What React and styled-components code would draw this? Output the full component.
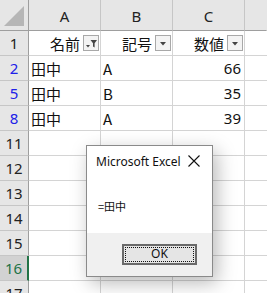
import React from "react";
import styled, { createGlobalStyle } from "styled-components";

const GlobalStyle = createGlobalStyle`
  html, body {
    margin: 0;
    padding: 0;
    background: #ffffff;
    overflow: hidden;
  }
`;

const rows = [
  { num: 1, header: true },
  { num: 2, a: "田中", b: "A", c: "66", filtered: true },
  { num: 5, a: "田中", b: "B", c: "35", filtered: true },
  { num: 8, a: "田中", b: "A", c: "39", filtered: true },
  { num: 11 },
  { num: 12 },
  { num: 13 },
  { num: 14 },
  { num: 15 },
  { num: 16, active: true },
  { num: 17 },
];

const headers = [
  { label: "名前", filter: true },
  { label: "記号" },
  { label: "数値" },
];

function DropButton({ filter }) {
  return (
    <FilterBtn>
      {filter ? (
        <svg width="14" height="14" viewBox="0 0 14 14">
          <path d="M2 9 L6 9 L4 11.5 Z" fill="#444" />
          <path d="M6.5 4 L13 4 L10.6 7.2 L10.6 11.5 L9 10.6 L9 7.2 Z" fill="#444" />
        </svg>
      ) : (
        <svg width="14" height="14" viewBox="0 0 14 14">
          <path d="M4 6 L10 6 L7 9.5 Z" fill="#444" />
        </svg>
      )}
    </FilterBtn>
  );
}

export default function App() {
  return (
    <Page>
      <GlobalStyle />
      <Sheet>
        <Corner>
          <CornerTri />
        </Corner>
        {["A", "B", "C"].map((c) => (
          <ColHead key={c}>{c}</ColHead>
        ))}
        <ColHead $rest />
        {rows.map((r) => (
          <React.Fragment key={r.num}>
            <RowHead $filtered={r.filtered} $active={r.active}>
              {r.num}
            </RowHead>
            {r.header
              ? headers.map((h) => (
                  <Cell key={h.label} $right>
                    <HeadText>{h.label}</HeadText>
                    <DropButton filter={h.filter} />
                  </Cell>
                ))
              : [
                  <Cell key="a">{r.a}</Cell>,
                  <Cell key="b">{r.b}</Cell>,
                  <Cell key="c" $right $num>
                    {r.c}
                  </Cell>,
                ]}
            <Cell $rest />
          </React.Fragment>
        ))}
      </Sheet>
      <Dialog>
        <DialogBody>
          <TitleBar>
            <Title>Microsoft Excel</Title>
            <svg width="12" height="12" viewBox="0 0 12 12">
              <path d="M0.5 0.5 L11.5 11.5 M11.5 0.5 L0.5 11.5" stroke="#111" strokeWidth="1.1" />
            </svg>
          </TitleBar>
          <Message>=田中</Message>
        </DialogBody>
        <Footer>
          <OkButton>
            <FocusRect>OK</FocusRect>
          </OkButton>
        </Footer>
      </Dialog>
    </Page>
  );
}

const Page = styled.div`
  position: relative;
  width: 267px;
  height: 293px;
  overflow: hidden;
  font-family: "Noto Sans CJK JP", "Liberation Sans", sans-serif;
`;

const Sheet = styled.div`
  display: grid;
  grid-template-columns: 29px 72px 72px 72px 1fr;
  grid-template-rows: 31px repeat(11, 25px);
`;

const Corner = styled.div`
  background: #e6e6e6;
  border-right: 1px solid #9e9e9e;
  border-bottom: 1px solid #9e9e9e;
  display: flex;
  align-items: flex-end;
  justify-content: flex-end;
  padding: 0 4px 4px 0;
`;

const CornerTri = styled.div`
  width: 0;
  height: 0;
  border-left: 20px solid transparent;
  border-bottom: 20px solid #b6b6b6;
`;

const ColHead = styled.div`
  background: #e6e6e6;
  border-right: 1px solid ${(p) => (p.$rest ? "transparent" : "#c6c6c6")};
  border-bottom: 1px solid #9e9e9e;
  display: flex;
  align-items: center;
  justify-content: center;
  padding-top: 2px;
  font-family: "Noto Sans", "Liberation Sans", sans-serif;
  font-size: 15px;
  color: #222;
`;

const RowHead = styled.div`
  background: ${(p) => (p.$active ? "#d2d2d2" : "#e6e6e6")};
  border-right: ${(p) => (p.$active ? "2px solid #217346" : "1px solid #9e9e9e")};
  border-bottom: 1px solid #c6c6c6;
  display: flex;
  align-items: center;
  justify-content: center;
  font-family: "Noto Sans", "Liberation Sans", sans-serif;
  font-size: 15px;
  color: ${(p) => (p.$filtered ? "#2020e8" : p.$active ? "#217346" : "#222")};
`;

const Cell = styled.div`
  border-right: 1px solid #d4d4d4;
  border-bottom: 1px solid #d4d4d4;
  display: flex;
  align-items: center;
  justify-content: ${(p) => (p.$right ? "flex-end" : "flex-start")};
  padding: ${(p) => (p.$right ? "0 3px 0 2px" : "0 2px")};
  font-family: ${(p) =>
    p.$num ? '"Noto Sans", "Liberation Sans", sans-serif' : '"Noto Sans CJK JP", sans-serif'};
  font-size: 15px;
  color: #111;
  white-space: nowrap;
  overflow: hidden;
  ${(p) => p.$rest && "border-right: none;"}
`;

const HeadText = styled.span`
  margin-right: 3px;
`;

const FilterBtn = styled.div`
  width: 14px;
  height: 14px;
  border: 1px solid #a8a8a8;
  background: #f3f3f3;
  display: flex;
  align-items: center;
  justify-content: center;
  margin-right: -2px;
`;

const Dialog = styled.div`
  position: absolute;
  left: 86px;
  top: 145px;
  width: 125px;
  height: 130px;
  border: 1px solid #8a8a8a;
  background: #ffffff;
  box-shadow: 4px 6px 18px rgba(0, 0, 0, 0.28);
  display: flex;
  flex-direction: column;
`;

const DialogBody = styled.div`
  flex: 1;
  display: flex;
  flex-direction: column;
`;

const TitleBar = styled.div`
  display: flex;
  align-items: center;
  justify-content: space-between;
  padding: 6px 12px 0 9px;
  height: 18px;
`;

const Title = styled.span`
  font-family: "Noto Sans", "Liberation Sans", sans-serif;
  font-size: 12px;
  color: #111;
`;

const Message = styled.div`
  margin: 28px 0 0 11px;
  font-family: "Noto Sans CJK JP", sans-serif;
  font-size: 11px;
  color: #111;
`;

const Footer = styled.div`
  height: 43px;
  background: #f0f0f0;
  display: flex;
  align-items: center;
  justify-content: flex-end;
  padding-right: 15px;
`;

const OkButton = styled.div`
  width: 71px;
  height: 17px;
  border: 2px solid #6a6a6a;
  background: #e5e5e5;
  display: flex;
  padding: 0;
  margin-top: -1px;
`;

const FocusRect = styled.div`
  flex: 1;
  margin: 1px;
  border: 1px dotted #111;
  display: flex;
  align-items: center;
  justify-content: center;
  font-family: "Noto Sans", "Liberation Sans", sans-serif;
  font-size: 12px;
  color: #111;
  line-height: 1;
`;
